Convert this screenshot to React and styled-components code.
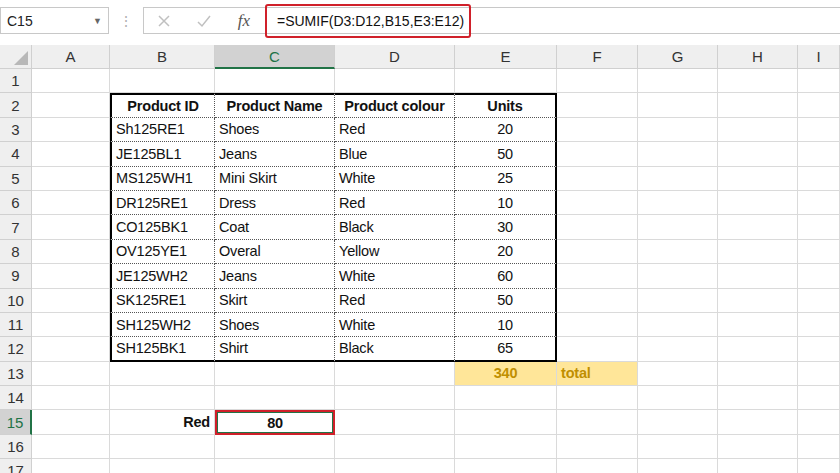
import React from 'react';
import styled, { createGlobalStyle, css } from 'styled-components';

const Global = createGlobalStyle`
  body { margin: 0; background: #fff; font-family: "Liberation Sans", Arial, sans-serif; overflow: hidden; }
`;

const Toolbar = styled.div`
  height: 45px;
  display: flex;
  align-items: center;
  box-sizing: border-box;
`;

const NameBox = styled.div`
  width: 109px;
  height: 27px;
  margin-bottom: 4px;
  border: 1px solid #c8c8c8;
  box-sizing: border-box;
  display: flex;
  align-items: center;
  justify-content: space-between;
  padding: 0 6px;
  font-size: 14px;
  color: #222;
`;

const Dots = styled.div`
  width: 34px;
  display: flex;
  justify-content: center;
  color: #b0b0b0;
  font-size: 14px;
  margin-bottom: 4px;
`;

const FormulaBar = styled.div`
  flex: 1;
  height: 27px;
  margin-bottom: 4px;
  border: 1px solid #c8c8c8;
  border-right: none;
  box-sizing: border-box;
  display: flex;
  align-items: center;
`;

const IconBtn = styled.div`
  width: 40px;
  display: flex;
  justify-content: center;
  align-items: center;
  color: ${p => p.$dark ? '#555' : '#c0c0c0'};
`;

const Fx = styled.span`
  font-family: "Liberation Serif", serif;
  font-style: italic;
  font-size: 17px;
  color: #555;
`;

const Formula = styled.div`
  margin-left: 1px;
  height: 34px;
  width: 206px;
  border: 2px solid #d0202a;
  border-radius: 3px;
  box-sizing: border-box;
  display: flex;
  align-items: center;
  padding-left: 10px;
  font-size: 14px;
  color: #111;
`;

const Sheet = styled.div`
  display: grid;
  grid-template-columns: 32px 78px 105px 120px 120px 102px 81px 80px 80px 1fr;
  grid-template-rows: 24px repeat(17, 24.4px);
`;

const Head = styled.div`
  background: ${p => p.$sel ? '#d2d2d2' : '#efefef'};
  color: ${p => p.$sel ? '#217346' : '#333'};
  border-right: 1px solid #d0d0d0;
  border-bottom: ${p => p.$sel && !p.$row ? '2px solid #217346' : '1px solid #d0d0d0'};
  ${p => p.$row && p.$sel && css`border-right: 2px solid #217346;`}
  box-sizing: border-box;
  display: flex;
  align-items: center;
  justify-content: center;
  font-size: 15px;
`;

const Corner = styled(Head)`
  position: relative;
  &::after {
    content: '';
    position: absolute;
    right: 3px;
    bottom: 3px;
    border-left: 14px solid transparent;
    border-bottom: 14px solid #b8b8b8;
  }
`;

const Cell = styled.div`
  box-sizing: border-box;
  border-right: 1px solid #dadada;
  border-bottom: 1px solid #dadada;
  display: flex;
  align-items: center;
  justify-content: ${p => p.$align || 'flex-start'};
  padding: 0 4px;
  font-size: 14.5px;
  letter-spacing: -0.2px;
  color: #111;
  white-space: nowrap;
  font-weight: ${p => p.$bold ? 700 : 400};
  ${p => p.$inT && css`border-right: 1px dotted #555; border-bottom: 1px dotted #555;`}
  ${p => p.$top && css`border-top: 2px solid #000;`}
  ${p => p.$bot && css`border-bottom: 2px solid #000;`}
  ${p => p.$left && css`border-left: 2px solid #000;`}
  ${p => p.$right && css`border-right: 2px solid #000;`}
  ${p => p.$yellow && css`background: #ffe699; color: #bf8f00; font-weight: 700;`}
  ${p => p.$active && css`
    border: 2px solid #d0202a;
    box-shadow: inset 0 0 0 1px #217346;
    font-weight: 700;
  `}
`;

const cols = ['A', 'B', 'C', 'D', 'E', 'F', 'G', 'H', 'I'];
const data = [
  ['Sh125RE1', 'Shoes', 'Red', '20'],
  ['JE125BL1', 'Jeans', 'Blue', '50'],
  ['MS125WH1', 'Mini Skirt', 'White', '25'],
  ['DR125RE1', 'Dress', 'Red', '10'],
  ['CO125BK1', 'Coat', 'Black', '30'],
  ['OV125YE1', 'Overal', 'Yellow', '20'],
  ['JE125WH2', 'Jeans', 'White', '60'],
  ['SK125RE1', 'Skirt', 'Red', '50'],
  ['SH125WH2', 'Shoes', 'White', '10'],
  ['SH125BK1', 'Shirt', 'Black', '65'],
];
const headers = ['Product ID', 'Product Name', 'Product colour', 'Units'];

function cellFor(r, c) {
  // r: 1-based row, c: 0-based col index (A=0)
  const inTable = r >= 2 && r <= 12 && c >= 1 && c <= 4;
  if (inTable) {
    const props = {
      $inT: true,
      $top: r === 2,
      $bot: r === 12,
      $left: c === 1,
      $right: c === 4,
    };
    if (r === 2) return { text: headers[c - 1], props: { ...props, $bold: true, $align: 'center' } };
    const text = data[r - 3][c - 1];
    return { text, props: { ...props, $align: c === 4 ? 'center' : 'flex-start' } };
  }
  if (r === 13 && c === 4) return { text: '340', props: { $yellow: true, $align: 'center' } };
  if (r === 13 && c === 5) return { text: 'total', props: { $yellow: true } };
  if (r === 15 && c === 1) return { text: 'Red', props: { $bold: true, $align: 'flex-end' } };
  if (r === 15 && c === 2) return { text: '80', props: { $active: true, $align: 'center' } };
  return { text: '', props: {} };
}

export default function App() {
  const rows = [];
  for (let r = 1; r <= 17; r++) {
    rows.push(<Head key={`h${r}`} $row $sel={r === 15}>{r}</Head>);
    for (let c = 0; c < 9; c++) {
      const { text, props } = cellFor(r, c);
      rows.push(<Cell key={`${r}-${c}`} {...props}>{text}</Cell>);
    }
  }
  return (
    <>
      <Global />
      <Toolbar>
        <NameBox>C15<span style={{ fontSize: 9, color: '#666' }}>▼</span></NameBox>
        <Dots>⋮</Dots>
        <FormulaBar>
          <IconBtn>
            <svg width="14" height="14" viewBox="0 0 14 14"><path d="M2 2L12 12M12 2L2 12" stroke="currentColor" strokeWidth="1.5" /></svg>
          </IconBtn>
          <IconBtn>
            <svg width="16" height="14" viewBox="0 0 16 14"><path d="M2 8L6 12L14 2" stroke="currentColor" strokeWidth="1.5" fill="none" /></svg>
          </IconBtn>
          <IconBtn $dark><Fx>fx</Fx></IconBtn>
          <Formula>=SUMIF(D3:D12,B15,E3:E12)</Formula>
        </FormulaBar>
      </Toolbar>
      <Sheet>
        <Corner />
        {cols.map(c => <Head key={c} $sel={c === 'C'}>{c}</Head>)}
        {rows}
      </Sheet>
    </>
  );
}
